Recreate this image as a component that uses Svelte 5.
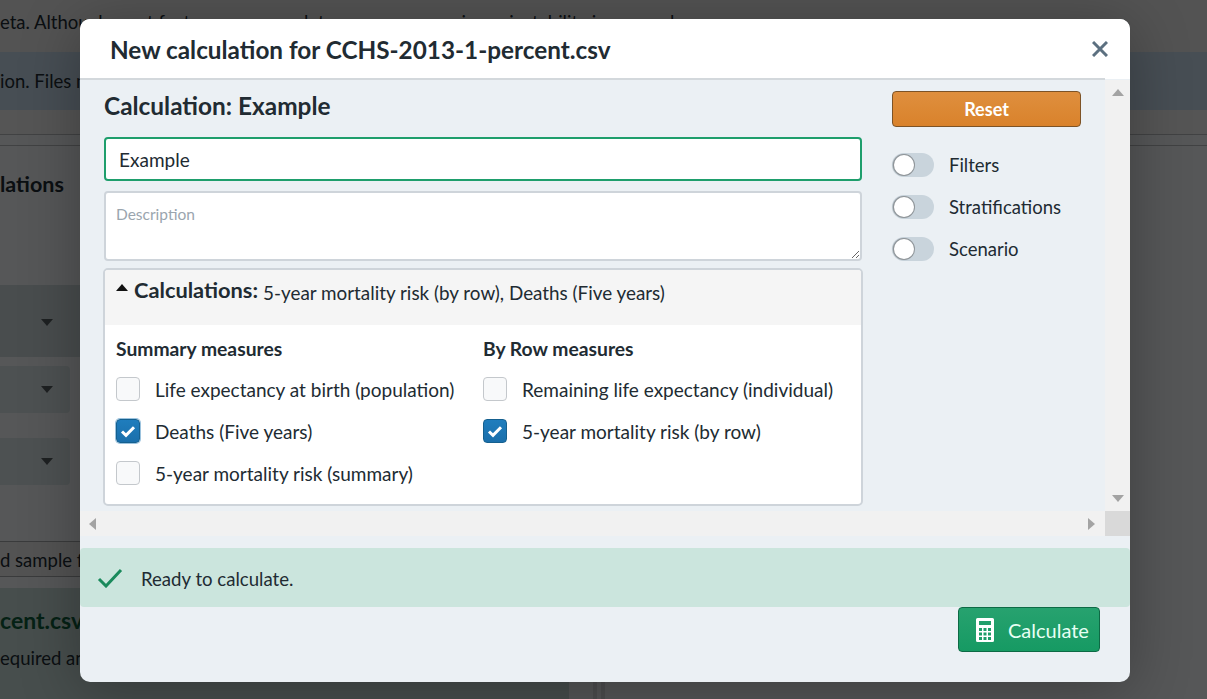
<script>
	const summary = [
		{ label: 'Life expectancy at birth (population)', checked: false },
		{ label: 'Deaths (Five years)', checked: true, focused: true },
		{ label: '5-year mortality risk (summary)', checked: false }
	];
	const byRow = [
		{ label: 'Remaining life expectancy (individual)', checked: false },
		{ label: '5-year mortality risk (by row)', checked: true }
	];
	const toggles = ['Filters', 'Stratifications', 'Scenario'];
	const groups = [
		{ title: 'Summary measures', items: summary },
		{ title: 'By Row measures', items: byRow }
	];
</script>

<div class="page">
	<div class="back">
		<p class="b-top">eta. Although most features are complete, you may experience instability in some places.</p>
		<p class="b-info">ion. Files must be stored on your computer.</p>
		<div class="b-tabs"></div>
		<div class="b-head">
			<h2>lations</h2>
		</div>
		<div class="b-row first"><i></i></div>
		<div class="b-row second"><i></i></div>
		<div class="b-row third"><i></i></div>
		<div class="b-sample">d sample file</div>
		<div class="b-lower">
			<div class="b-file">
				<h3>cent.csv</h3>
				<p>equired and</p>
			</div>
			<div class="b-divider"></div>
			<div class="b-side"></div>
		</div>
	</div>

	<div class="scrim"></div>

	<div class="modal">
		<header>
			<h1>New calculation for CCHS-2013-1-percent.csv</h1>
			<button class="close" aria-label="Close">
				<svg width="16" height="16" viewBox="0 0 16 16"><path d="M1 1 15 15M15 1 1 15" stroke="#5c7080" stroke-width="3" /></svg>
			</button>
		</header>

		<div class="scroller">
			<div class="scroll-inner">
				<div class="content">
					<div class="main">
						<h2 class="calc-title">Calculation: Example</h2>
						<input class="name" type="text" value="Example" />
						<textarea class="desc" placeholder="Description"></textarea>
						<section class="panel">
							<div class="panel-head">
								<span class="caret"></span>
								<strong>Calculations:</strong>
								<span class="chosen">5-year mortality risk (by row), Deaths (Five years)</span>
							</div>
							<div class="panel-body">
								{#each groups as group}
									<div class="group">
										<h4>{group.title}</h4>
										{#each group.items as item}
											<div class="check-row">
												<span class="box" class:checked={item.checked} class:focused={item.focused}>
													{#if item.checked}
														<svg width="16" height="13" viewBox="0 0 16 13"><path d="M2 6.500 6 10.300 14 2.300" fill="none" stroke="#fff" stroke-width="3" /></svg>
													{/if}
												</span>
												<span>{item.label}</span>
											</div>
										{/each}
									</div>
								{/each}
							</div>
						</section>
					</div>
					<aside>
						<button class="reset">Reset</button>
						<div class="toggles">
							{#each toggles as t}
								<div class="toggle-row">
									<span class="switch"><span class="knob"></span></span>
									<span>{t}</span>
								</div>
							{/each}
						</div>
					</aside>
				</div>
				<div class="vbar">
					<span class="arrow up"></span>
					<span class="arrow down"></span>
				</div>
			</div>
			<div class="hbar">
				<div class="htrack">
					<span class="arrow left"></span>
					<span class="arrow right"></span>
				</div>
				<div class="corner"></div>
			</div>
		</div>

		<div class="status">
			<svg width="26" height="20" viewBox="0 0 26 20"><path d="M2 11 9 18 24 2" fill="none" stroke="#1a8a5c" stroke-width="3" /></svg>
			<span>Ready to calculate.</span>
		</div>

		<footer>
			<button class="calculate">
				<svg width="18" height="24" viewBox="0 0 18 24">
					<path fill-rule="evenodd" fill="#fff" d="M1.500 0h15A1.500 1.500 0 0 1 18 1.500v21a1.500 1.500 0 0 1-1.500 1.500h-15A1.500 1.500 0 0 1 0 22.500v-21A1.500 1.500 0 0 1 1.500 0ZM3 3v4h12V3ZM3 10v3h3v-3ZM7.500 10v3h3v-3ZM12 10v3h3v-3ZM3 14.500v3h3v-3ZM7.500 14.500v3h3v-3ZM12 14.500v3h3v-3ZM3 19v3h3v-3ZM7.500 19v3h3v-3ZM12 19v3h3v-3Z" />
				</svg>
				<span>Calculate</span>
			</button>
		</footer>
	</div>
</div>

<style>
	:global(body) {
		margin: 0;
		font-family: 'Lato', 'Open Sans', sans-serif;
		color: #212b32;
	}

	.page {
		position: relative;
		width: 1207px;
		height: 699px;
		overflow: hidden;
		background: #fff;
	}

	.back {
		display: flex;
		flex-direction: column;
		height: 100%;
		font-size: 18.500px;
		background: #eef1f4;
		color: #212b32;
	}

	.back p,
	.back h2,
	.back h3 {
		margin: 0;
	}

	.b-top {
		height: 52px;
		flex: none;
		padding-top: 11px;
		box-sizing: border-box;
		white-space: nowrap;
		background: #e6e6e6;
	}

	.b-info {
		height: 58px;
		flex: none;
		padding-top: 18px;
		box-sizing: border-box;
		background: #c5d8e8;
		white-space: nowrap;
	}

	.b-tabs {
		height: 36px;
		flex: none;
		box-sizing: border-box;
		background: #ececec;
		border-bottom: 1px solid #b5b8ba;
		box-shadow: inset 0 -10px 0 #eef1f4, inset 0 -11px 0 #b5b8ba;
	}

	.b-head {
		height: 139px;
		flex: none;
		padding-top: 25px;
		box-sizing: border-box;
	}

	.back h2 {
		font-size: 21.500px;
		line-height: 26px;
		font-weight: 700;
	}

	.b-row {
		flex: none;
		display: flex;
		align-items: center;
		padding-left: 41px;
		box-sizing: border-box;
		background: #cbd6d8;
		border-radius: 0 4px 4px 0;
	}

	.b-row.first {
		height: 72px;
		width: 120px;
		padding-top: 3px;
	}

	.b-row.second {
		height: 47px;
		width: 70px;
		margin-top: 9px;
		background: #d6e0e2;
	}

	.b-row.third {
		height: 47px;
		width: 70px;
		margin-top: 25px;
		background: #d6e0e2;
	}

	.b-row i {
		width: 0;
		height: 0;
		border: 6px solid transparent;
		border-top: 7px solid #555c60;
		border-bottom: 0;
	}

	.b-sample {
		flex: none;
		width: 560px;
		height: 36px;
		margin-top: 56px;
		line-height: 36px;
		white-space: nowrap;
		box-sizing: border-box;
		border-top: 1px solid #a0a4a6;
		border-bottom: 1px solid #a0a4a6;
		background: #e6e6e6;
	}

	.b-lower {
		flex: 1;
		margin-top: 11px;
		display: flex;
	}

	.b-file {
		width: 569px;
		background: #c6d8d6;
		padding-top: 17px;
		box-sizing: border-box;
		white-space: nowrap;
	}

	.back h3 {
		font-size: 23px;
		line-height: 30px;
		font-weight: 700;
		color: #0e5c3a;
	}

	.b-file p {
		margin-top: 12px;
	}

	.b-divider {
		width: 36px;
		border-right: 12px double #d6d9dc;
		box-sizing: border-box;
	}

	.b-side {
		flex: 1;
	}

	.scrim {
		position: absolute;
		inset: 0;
		background: rgba(0, 0, 0, 0.64);
	}

	.modal {
		position: absolute;
		left: 80px;
		top: 19px;
		width: 1050px;
		height: 663px;
		border-radius: 10px;
		background: #ebf0f4;
		box-shadow: 0 8px 60px rgba(0, 0, 0, 0.3);
		overflow: hidden;
		display: flex;
		flex-direction: column;
	}

	header {
		height: 61px;
		flex: none;
		background: #fff;
		border-bottom: 2px solid #d3d8dc;
		box-sizing: border-box;
		margin-right: 25px;
		padding: 1px 0 0 30px;
		display: flex;
		align-items: center;
		position: relative;
	}

	header::after {
		content: '';
		position: absolute;
		right: -25px;
		top: 0;
		width: 25px;
		height: 60px;
		background: #fff;
	}

	h1 {
		margin: 0;
		font-size: 24.300px;
		font-weight: 700;
	}

	.close {
		position: absolute;
		right: -3px;
		top: 22px;
		z-index: 1;
		padding: 0;
		border: 0;
		background: none;
		line-height: 0;
	}

	.scroller {
		height: 456px;
		flex: none;
		display: flex;
		flex-direction: column;
	}

	.scroll-inner {
		display: flex;
		flex: 1;
		min-height: 0;
	}

	.content {
		flex: 1;
		display: flex;
		padding-left: 24px;
	}

	.main {
		width: 758px;
	}

	.calc-title {
		margin: 11px 0 17px;
		font-size: 24.400px;
		line-height: 29px;
		font-weight: 700;
	}

	.name {
		display: block;
		width: 100%;
		height: 44px;
		box-sizing: border-box;
		border: 2px solid #1e9e6c;
		border-radius: 4px;
		background: #fff;
		padding: 1px 13px 0;
		font: 19px 'Lato', sans-serif;
		color: #212b32;
		outline: none;
	}

	.desc {
		display: block;
		width: 100%;
		height: 70px;
		margin-top: 10px;
		box-sizing: border-box;
		border: 2px solid #ced4da;
		border-radius: 4px;
		background: #fff;
		padding: 12px 10px;
		font: 15.500px 'Lato', sans-serif;
		outline: none;
	}

	.desc::placeholder {
		color: #9aa5ae;
	}

	.panel {
		width: 760px;
		margin: 7px 0 0 -1px;
		border: 2px solid #ced4da;
		border-radius: 5px;
		background: #fff;
		box-sizing: border-box;
		height: 238px;
		overflow: hidden;
	}

	.panel-head {
		height: 55px;
		background: #f5f5f5;
		padding: 6px 11px 0;
		box-sizing: border-box;
		display: flex;
		align-items: flex-start;
		gap: 5px;
		font-size: 18.850px;
		line-height: 28px;
	}

	.panel-head strong {
		margin-left: 1px;
		font-size: 21.800px;
		font-weight: 700;
	}

	.chosen {
		margin-top: 3px;
	}

	.caret {
		width: 0;
		height: 0;
		border: 6px solid transparent;
		border-top: 0;
		border-bottom: 7px solid #111;
		margin-top: 8px;
	}

	.panel-body {
		display: grid;
		grid-template-columns: 367px 1fr;
		padding: 12px 11px 0;
	}

	h4 {
		margin: 0 0 7px;
		font-size: 19.300px;
		line-height: 24px;
		font-weight: 700;
	}

	.check-row {
		display: flex;
		align-items: center;
		gap: 15px;
		height: 42px;
		font-size: 19px;
		white-space: nowrap;
	}

	.box {
		width: 24px;
		height: 24px;
		box-sizing: border-box;
		border: 1px solid #c4c8cc;
		border-radius: 4px;
		background: #f8f9fa;
		display: flex;
		align-items: center;
		justify-content: center;
	}

	.box.checked {
		background: linear-gradient(#1f7dbd, #1a6fab);
		border-color: #15608f;
	}

	.box.focused {
		box-shadow: 0 0 0 1px #9cc3de;
	}

	aside {
		width: 189px;
		margin-left: 30px;
		padding-top: 11px;
	}

	.reset {
		display: block;
		width: 189px;
		height: 36px;
		box-sizing: border-box;
		border: 1px solid #7d5326;
		border-radius: 4px;
		background: linear-gradient(#df8f3e, #d9822b);
		color: #fff;
		font: 700 18px 'Lato', sans-serif;
	}

	.toggles {
		margin-top: 26px;
		display: flex;
		flex-direction: column;
		gap: 18px;
	}

	.toggle-row {
		display: flex;
		align-items: center;
		gap: 15px;
		height: 24px;
		font-size: 18.500px;
	}

	.switch {
		width: 42px;
		height: 24px;
		border-radius: 12px;
		background: #c9d4dc;
		position: relative;
		flex: none;
	}

	.knob {
		position: absolute;
		left: 2px;
		top: 2px;
		width: 20px;
		height: 20px;
		border-radius: 50%;
		background: #fff;
		box-shadow: 0 0 0 1px #8f9599, -1px 0 2px rgba(0, 0, 0, 0.4);
	}

	.vbar {
		width: 25px;
		background: #f1f1f1;
		display: flex;
		flex-direction: column;
		justify-content: space-between;
		align-items: center;
		padding: 9px 0;
		box-sizing: border-box;
	}

	.hbar {
		height: 25px;
		display: flex;
		flex: none;
		background: #f1f1f1;
	}

	.htrack {
		flex: 1;
		display: flex;
		justify-content: space-between;
		align-items: center;
		padding: 0 10px 0 9px;
	}

	.corner {
		width: 25px;
		background: #d9d9d9;
	}

	.arrow {
		width: 0;
		height: 0;
		border: 6px solid transparent;
	}

	.up {
		border-top: 0;
		border-bottom: 7px solid #a3a3a3;
	}

	.down {
		border-bottom: 0;
		border-top: 7px solid #a3a3a3;
	}

	.left {
		border-left: 0;
		border-right: 7px solid #a3a3a3;
	}

	.right {
		border-right: 0;
		border-left: 7px solid #a3a3a3;
	}

	.status {
		margin-top: 12px;
		height: 59px;
		flex: none;
		background: #cbe5dd;
		border-radius: 4px;
		display: flex;
		align-items: center;
		gap: 18px;
		padding-left: 17px;
		font-size: 18.600px;
	}

	.status span {
		padding-top: 2px;
	}

	footer {
		display: flex;
		justify-content: flex-end;
		padding-right: 30px;
	}

	.calculate {
		display: flex;
		align-items: center;
		gap: 14px;
		width: 142px;
		height: 45px;
		box-sizing: border-box;
		padding: 0 0 0 17px;
		border: 1px solid #0d6a45;
		border-radius: 4px;
		background: linear-gradient(#27a26f, #169a63);
		color: #e8fff4;
		font: 400 20px 'Lato', sans-serif;
	}
</style>
